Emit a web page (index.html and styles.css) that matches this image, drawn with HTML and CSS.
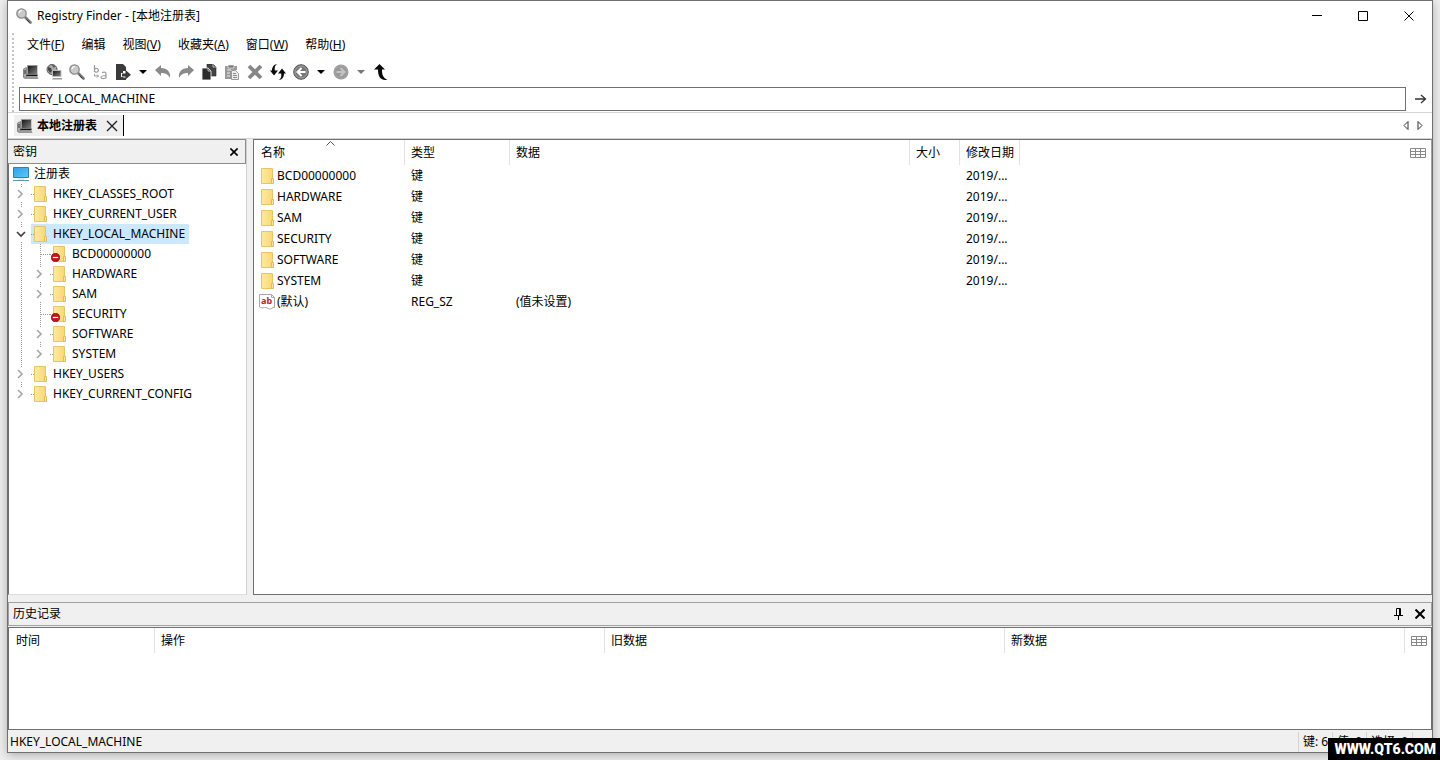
FILE: index.html
```html
<!DOCTYPE html>
<html lang="zh-CN">
<head>
<meta charset="utf-8">
<title>Registry Finder - [本地注册表]</title>
<link rel="stylesheet" href="styles.css">
</head>
<body>
<svg class="defs" aria-hidden="true">
  <defs>
    <linearGradient id="gFolder" x1="0" y1="0" x2="1" y2="0"><stop offset="0" stop-color="#ffe9a2"/><stop offset="1" stop-color="#f8d775"/></linearGradient>
    <linearGradient id="gScreen" x1="0" y1="0" x2="1" y2="1"><stop offset="0" stop-color="#111"/><stop offset="1" stop-color="#888"/></linearGradient>
    <linearGradient id="gBlue" x1="0" y1="0" x2="1" y2="1"><stop offset="0" stop-color="#2e9fe6"/><stop offset="1" stop-color="#5ec8fa"/></linearGradient>
    <symbol id="folder" viewBox="0 0 14 16"><path d="M.5.5h11v15H.5z" fill="url(#gFolder)" stroke="#e6c567"/><path d="M10.500 10.500h2v5h-2z" fill="#ffe699" stroke="#dfbd58"/></symbol>
    <symbol id="chev" viewBox="0 0 8 10"><path d="M2 1l4 4-4 4" fill="none" stroke="#a6a6a6" stroke-width="1.600"/></symbol>
    <symbol id="chevd" viewBox="0 0 10 8"><path d="M1 2l4 4 4-4" fill="none" stroke="#404040" stroke-width="1.700"/></symbol>
    <symbol id="search" viewBox="0 0 16 16"><path d="M9.500 9.500l5 5" stroke="#777" stroke-width="2.600" stroke-linecap="round"/><path d="M10.500 11.500l3 3" stroke="#333" stroke-width="1"/><circle cx="5.500" cy="5.500" r="4.700" fill="#c9c9c9" stroke="#8a8a8a" stroke-width="1.300"/><path d="M3 5a3 3 0 0 1 3-2.500" stroke="#fff" stroke-width="1.200" fill="none"/></symbol>
    <symbol id="pc" viewBox="0 0 16 16"><path d="M.5 5l3-1.500V13l-3 .5z" fill="#aaa" stroke="#888"/><path d="M1 7h2M1 9h2" stroke="#333"/><path d="M4.500 1.500h10v9h-10z" fill="url(#gScreen)" stroke="#999"/><path d="M14.500 1.500v9" stroke="#ccc"/><path d="M2 12.500h12.500l1 2.500H1z" fill="#999"/><path d="M3.500 11.500h11" stroke="#111" stroke-width="1.500"/></symbol>
    <symbol id="globe" viewBox="0 0 16 16"><circle cx="6" cy="5.500" r="5" fill="#aaa" stroke="#555"/><path d="M2 3l3 1 1 3-2 2-2-3zM6 1l3 1-1 2z" fill="#444"/><path d="M6.500 6.500h8.500v6H6.500z" fill="url(#gScreen)" stroke="#bbb"/><path d="M7 14h9v1.500H6z" fill="#999"/></symbol>
    <symbol id="replace" viewBox="0 0 16 16"><path d="M2.500 1v7M2.500 5.500a2 2 0 1 1 0 1.500M10 8.500c3-1 4 0 4 1.500v4.500M14 11.500c-4 0-5 .5-5 2s4 1.500 5 0" fill="none" stroke="#999" stroke-width="1.200"/><path d="M2.500 10v2h4M5 10.500L6.500 12 5 13.500" fill="none" stroke="#999"/></symbol>
    <symbol id="export" viewBox="0 0 16 16"><path d="M1 0h7l3 3v4H8v2H6v4h2v3H1z" fill="#3b3b3b"/><path d="M7 9.500h3.500V6L16 10.800l-5.500 4.700v-3H7z" fill="#3b3b3b"/><path d="M8 13.500h3V16H8z" fill="#3b3b3b"/></symbol>
    <symbol id="undo" viewBox="0 0 16 16"><path d="M0 6l6-5v3c6 0 10 4 9 10-2-4-5-5-9-5v3z" fill="#8a8a8a"/></symbol>
    <symbol id="copy" viewBox="0 0 16 16"><path d="M6 0h6l3 3v9H6z" fill="#444" stroke="#222" stroke-width=".6"/><path d="M1 4h6l3 3v9H1z" fill="#2d2d2d" stroke="#fff" stroke-width=".8"/><path d="M7 4v3h3M12 0v3h3" fill="none" stroke="#ddd" stroke-width=".8"/></symbol>
    <symbol id="paste" viewBox="0 0 16 16"><path d="M1 2h12v4h-6v9H1z" fill="#999"/><path d="M4 1h6v3H4z" fill="#777" stroke="#eee" stroke-width=".7"/><path d="M3 6h4M3 9h3M3 12h3" stroke="#eee"/><path d="M7.500 6.500h4l3 3v6h-7z" fill="#eee" stroke="#999"/><path d="M9 9.500h3M9 11.500h4M9 13.500h4" stroke="#888"/></symbol>
    <symbol id="del" viewBox="0 0 16 16"><path d="M2 2l12 12M14 2L2 14" stroke="#868686" stroke-width="3.800"/></symbol>
    <symbol id="refresh" viewBox="0 0 16 16"><path d="M7.500 0C4.500 1.500 4.600 3.500 4.900 6.500H8L4 11.500 0 6.500h2C2 3.500 3.500.2 7.500 0zM8.500 16c3-1.500 3-3.500 2.700-6.500H8l4-5 4 5h-2c0 3-1.500 6.500-5.500 6.500z" fill="#0a0a0a"/></symbol>
    <symbol id="back" viewBox="0 0 16 16"><circle cx="8" cy="8" r="7.300" fill="#777" stroke="#555"/><circle cx="8" cy="8" r="6" fill="none" stroke="#aaa" stroke-width=".8"/><path d="M12.500 8H5M8.500 4L4.500 8l4 4" fill="none" stroke="#fff" stroke-width="2"/></symbol>
    <symbol id="fwd" viewBox="0 0 16 16"><circle cx="8" cy="8" r="7.500" fill="#999"/><circle cx="8" cy="8" r="6.300" fill="none" stroke="#aaa" stroke-width=".8"/><path d="M3.500 8H11M7.500 4l4 4-4 4" fill="none" stroke="#c4c4c4" stroke-width="2"/></symbol>
    <symbol id="up" viewBox="0 0 16 16"><path d="M6.500 0L12 5.500H9C9 10 9.500 13.500 14.500 16 7.500 16.500 5 13 5 5.500H1z" fill="#0a0a0a"/></symbol>
    <symbol id="drop" viewBox="0 0 8 4"><path d="M0 0h8L4 4z" fill="currentColor"/></symbol>
    <symbol id="x" viewBox="0 0 10 10"><path d="M.5.5l9 9M9.500.5l-9 9" fill="none" stroke="currentColor"/></symbol>
    <symbol id="grid" viewBox="0 0 16 10"><path d="M.5.5h15v9H.5zM.5 3.500h15M.5 6.500h15M5.500.5v9M10.500.5v9" fill="none" stroke="#888"/></symbol>
    <symbol id="monitor" viewBox="0 0 16 15"><path d="M.5.500h15v10H.5z" fill="url(#gBlue)" stroke="#2d7fb5"/><path d="M5 12h6" stroke="#b5d3e5"/><path d="M0 13.500h16" stroke="#5f93b5"/></symbol>
    <symbol id="ban" viewBox="0 0 10 10"><circle cx="5" cy="5" r="4.500" fill="#c4161c" stroke="#8f1014"/><path d="M2 5h6" stroke="#fff" stroke-width="1.300"/></symbol>
    <symbol id="sheet" viewBox="0 0 16 16"><path d="M.5.5h12l3 3v10c-2-1-3 2-5 1.500s-3-2-5-1.500-3 .5-5-.5z" fill="#fff" stroke="#a8a8a8"/><path d="M12.500.5v3h3" fill="none" stroke="#a8a8a8"/></symbol>
  </defs>
</svg>

<main class="window">
  <header class="titlebar">
    <svg class="i16"><use href="#search"/></svg>
    <h1 class="title">Registry Finder - [本地注册表]</h1>
    <button class="winbtn" aria-label="最小化"><svg width="10" height="10"><path d="M0 4.500h10" stroke="#000"/></svg></button>
    <button class="winbtn" aria-label="最大化"><svg width="10" height="10"><path d="M.5.5h9v9h-9z" fill="none" stroke="#000"/></svg></button>
    <button class="winbtn" aria-label="关闭"><svg width="10" height="10"><use href="#x"/></svg></button>
  </header>

  <div class="bars">
    <nav class="menu">
      <button>文件(<u>F</u>)</button><button>编辑</button><button>视图(<u>V</u>)</button><button>收藏夹(<u>A</u>)</button><button>窗口(<u>W</u>)</button><button>帮助(<u>H</u>)</button>
    </nav>
    <div class="toolbar">
      <button aria-label="本地注册表"><svg class="i16"><use href="#pc"/></svg></button>
      <button aria-label="远程注册表"><svg class="i16"><use href="#globe"/></svg></button>
      <button aria-label="查找"><svg class="i16"><use href="#search"/></svg></button>
      <button aria-label="替换"><svg class="i16"><use href="#replace"/></svg></button>
      <button aria-label="导出"><svg class="i16"><use href="#export"/></svg></button>
      <button class="arrow" aria-label="导出选项"><svg class="dr"><use href="#drop"/></svg></button>
      <button aria-label="撤消"><svg class="i16"><use href="#undo"/></svg></button>
      <button aria-label="重做"><svg class="i16 flip"><use href="#undo"/></svg></button>
      <button aria-label="复制"><svg class="i16"><use href="#copy"/></svg></button>
      <button aria-label="粘贴"><svg class="i16"><use href="#paste"/></svg></button>
      <button aria-label="删除"><svg class="i16"><use href="#del"/></svg></button>
      <button aria-label="刷新"><svg class="i16"><use href="#refresh"/></svg></button>
      <button aria-label="后退"><svg class="i16"><use href="#back"/></svg></button>
      <button class="arrow" aria-label="后退历史"><svg class="dr"><use href="#drop"/></svg></button>
      <button aria-label="前进"><svg class="i16"><use href="#fwd"/></svg></button>
      <button class="arrow dim" aria-label="前进历史"><svg class="dr"><use href="#drop"/></svg></button>
      <button aria-label="向上"><svg class="i16"><use href="#up"/></svg></button>
    </div>
    <div class="address">
      <input type="text" aria-label="地址" value="HKEY_LOCAL_MACHINE">
      <button aria-label="转到"><svg width="12" height="10"><path d="M0 5h10M6 1l4.500 4L6 9" fill="none" stroke="#333" stroke-width="1.300"/></svg></button>
    </div>
  </div>

  <div class="tabs">
    <div class="tab">
      <svg class="i16"><use href="#pc"/></svg>
      <span>本地注册表</span>
      <button aria-label="关闭标签"><svg width="12" height="12" viewBox="0 0 12 12"><path d="M1 1l10 10M11 1L1 11" stroke="#222" stroke-width="1.400"/></svg></button>
    </div>
    <div class="tabnav">
      <button aria-label="上一个"><svg width="6" height="9"><path d="M5 .5v8L1 4.500z" fill="none" stroke="#333"/></svg></button>
      <button aria-label="下一个"><svg width="6" height="9"><path d="M1 .5v8l4-4z" fill="none" stroke="#333"/></svg></button>
    </div>
  </div>

  <div class="panes">
    <section class="keys">
      <div class="keyhead"><h2>密钥</h2><button aria-label="关闭"><svg width="8" height="8" viewBox="0 0 10 10" class="bold"><use href="#x"/></svg></button></div>
      <ul class="tree">
        <li class="row root"><svg class="mon"><use href="#monitor"/></svg><span>注册表</span></li>
        <li class="row"><button class="tw" aria-label="展开"><svg class="cv"><use href="#chev"/></svg></button><span class="node"><svg class="fo"><use href="#folder"/></svg>HKEY_CLASSES_ROOT</span></li>
        <li class="row"><button class="tw" aria-label="展开"><svg class="cv"><use href="#chev"/></svg></button><span class="node"><svg class="fo"><use href="#folder"/></svg>HKEY_CURRENT_USER</span></li>
        <li class="row"><button class="tw" aria-label="折叠"><svg class="cd"><use href="#chevd"/></svg></button><span class="node sel"><svg class="fo"><use href="#folder"/></svg>HKEY_LOCAL_MACHINE</span></li>
        <li class="row"><i class="guide"></i><i class="tw leaf"></i><span class="node"><svg class="fo"><use href="#folder"/></svg><svg class="ban"><use href="#ban"/></svg>BCD00000000</span></li>
        <li class="row"><i class="guide"></i><button class="tw" aria-label="展开"><svg class="cv"><use href="#chev"/></svg></button><span class="node"><svg class="fo"><use href="#folder"/></svg>HARDWARE</span></li>
        <li class="row"><i class="guide"></i><button class="tw" aria-label="展开"><svg class="cv"><use href="#chev"/></svg></button><span class="node"><svg class="fo"><use href="#folder"/></svg>SAM</span></li>
        <li class="row"><i class="guide"></i><i class="tw leaf"></i><span class="node"><svg class="fo"><use href="#folder"/></svg><svg class="ban"><use href="#ban"/></svg>SECURITY</span></li>
        <li class="row"><i class="guide"></i><button class="tw" aria-label="展开"><svg class="cv"><use href="#chev"/></svg></button><span class="node"><svg class="fo"><use href="#folder"/></svg>SOFTWARE</span></li>
        <li class="row"><i class="guide"></i><button class="tw end" aria-label="展开"><svg class="cv"><use href="#chev"/></svg></button><span class="node"><svg class="fo"><use href="#folder"/></svg>SYSTEM</span></li>
        <li class="row"><button class="tw" aria-label="展开"><svg class="cv"><use href="#chev"/></svg></button><span class="node"><svg class="fo"><use href="#folder"/></svg>HKEY_USERS</span></li>
        <li class="row"><button class="tw end" aria-label="展开"><svg class="cv"><use href="#chev"/></svg></button><span class="node"><svg class="fo"><use href="#folder"/></svg>HKEY_CURRENT_CONFIG</span></li>
      </ul>
    </section>

    <section class="values">
      <table class="grid">
        <colgroup><col class="c-name"><col class="c-type"><col class="c-data"><col class="c-size"><col class="c-date"><col></colgroup>
        <thead><tr><th class="sorted">名称<svg class="sort" width="9" height="5"><path d="M.5 4.500l4-4 4 4" fill="none" stroke="#555"/></svg></th><th>类型</th><th>数据</th><th>大小</th><th>修改日期</th><th class="pick"><button aria-label="选择列"><svg class="gi"><use href="#grid"/></svg></button></th></tr></thead>
        <tbody>
          <tr><td><span class="cell"><svg class="fo"><use href="#folder"/></svg>BCD00000000</span></td><td>键</td><td></td><td></td><td>2019/...</td><td></td></tr>
          <tr><td><span class="cell"><svg class="fo"><use href="#folder"/></svg>HARDWARE</span></td><td>键</td><td></td><td></td><td>2019/...</td><td></td></tr>
          <tr><td><span class="cell"><svg class="fo"><use href="#folder"/></svg>SAM</span></td><td>键</td><td></td><td></td><td>2019/...</td><td></td></tr>
          <tr><td><span class="cell"><svg class="fo"><use href="#folder"/></svg>SECURITY</span></td><td>键</td><td></td><td></td><td>2019/...</td><td></td></tr>
          <tr><td><span class="cell"><svg class="fo"><use href="#folder"/></svg>SOFTWARE</span></td><td>键</td><td></td><td></td><td>2019/...</td><td></td></tr>
          <tr><td><span class="cell"><svg class="fo"><use href="#folder"/></svg>SYSTEM</span></td><td>键</td><td></td><td></td><td>2019/...</td><td></td></tr>
          <tr><td><span class="cell"><span class="ab"><svg class="i16"><use href="#sheet"/></svg><b>ab</b></span>(默认)</span></td><td>REG_SZ</td><td>(值未设置)</td><td></td><td></td><td></td></tr>
        </tbody>
      </table>
    </section>
  </div>

  <section class="history">
    <div class="histhead"><h2>历史记录</h2>
      <button aria-label="固定"><svg width="9" height="12"><path d="M2.500 7V.5h4V7M0 7.500h9M4.500 7.500V12M5.500 1v6" fill="none" stroke="#000"/></svg></button>
      <button aria-label="关闭"><svg width="10" height="10" class="bold"><use href="#x"/></svg></button>
    </div>
    <div class="histlist">
      <table class="grid">
        <colgroup><col class="h-time"><col class="h-op"><col class="h-old"><col class="h-new"><col></colgroup>
        <thead><tr><th>时间</th><th>操作</th><th>旧数据</th><th>新数据</th><th class="pick"><button aria-label="选择列"><svg class="gi"><use href="#grid"/></svg></button></th></tr></thead>
      </table>
    </div>
  </section>

  <footer class="status"><span class="path">HKEY_LOCAL_MACHINE</span><span>键: 6</span><span>值: 0</span><span class="wide">选择: 0</span><span class="tail"></span></footer>
</main>
<div class="mark">WWW.QT6.COM</div>
</body>
</html>
```

FILE: styles.css
```css
* { box-sizing: border-box; }
body {
  margin: 0;
  height: 100vh;
  padding: 0 7px 7px;
  display: flex;
  background: #f0f0f0;
  color: #000;
  font: 12px/20px "Noto Sans", "Noto Sans CJK SC", sans-serif;
  overflow: hidden;
}
button { border: 0; padding: 0; background: none; font: inherit; color: inherit; display: flex; align-items: center; justify-content: center; }
svg { display: block; flex: none; }
h1, h2 { margin: 0; font-size: 12px; font-weight: 400; }
.defs { position: absolute; width: 0; height: 0; }
.i16 { width: 16px; height: 16px; }
.window { flex: 1; min-width: 0; display: flex; flex-direction: column; background: #fff; border: 1px solid #707070; box-shadow: 0 2px 10px #aaa; }

.titlebar { display: flex; align-items: center; height: 30px; padding-left: 8px; }
.title { flex: 1; padding-left: 5px; }
.winbtn { width: 46px; height: 30px; }

.bars { position: relative; padding-left: 11px; border-bottom: 1px solid #d4d4d4; }
.bars::before { content: ""; position: absolute; left: 4px; top: 2px; bottom: 0; border-left: 2px dotted #c4c4c4; }
.menu { display: flex; gap: 17px; height: 28px; padding-left: 8px; align-items: center; }
.toolbar { display: flex; align-items: center; height: 26px; }
.toolbar button { width: 23px; height: 24px; }
.toolbar .arrow { width: 17px; }
.toolbar .dim { color: #777; }
.dr { width: 8px; height: 4px; }
.flip { transform: scaleX(-1); }
.address { display: flex; padding: 2px 0 1px; }
.address input { flex: 1; min-width: 0; height: 24px; border: 1px solid #707070; padding: 0 3px 1px; font: inherit; background: #fff; }
.address button { width: 26px; padding-left: 4px; }

.tabs { display: flex; align-items: center; justify-content: space-between; height: 26px; border-bottom: 1px solid #d4d4d4; }
.tab { display: flex; align-items: center; margin-left: 6px; padding-left: 3px; height: 21px; background: #efefef; border-right: 1px solid #000; font-weight: 700; }
.tab span { padding-left: 4px; }
.tab button { width: 26px; height: 20px; padding-left: 3px; }
.tabnav { display: flex; gap: 8px; padding-right: 9px; }

.panes { flex: 1; min-height: 0; display: grid; grid-template-columns: 239px 1fr; gap: 6px; background: #f0f0f0; }
.keys { display: flex; flex-direction: column; border-right: 1px solid #d0d0d0; }
.keyhead { display: flex; align-items: center; justify-content: space-between; height: 25px; padding: 0 7px 0 5px; border: 1px solid #8c8c8c; border-left: 0; background: #f0f0f0; }
.bold { stroke-width: 2px; overflow: visible; }
.tree { flex: 1; margin: 0; padding: 0 0 0 1px; list-style: none; background: #fff; border-left: 1px solid #707070; border-bottom: 1px solid #ddd; }
.row { display: flex; height: 20px; padding-left: 2px; }
.root { align-items: center; gap: 5px; }
.mon { width: 16px; height: 15px; margin-left: 1px; }
.tw, .guide { width: 19px; height: 20px; background: repeating-linear-gradient(#999 0 1px, #fff 1px 2px) 9px 0 / 1px 100% no-repeat; }
.tw { justify-content: flex-start; padding-left: 4px; }
.tw.end { background-size: 1px 10px; }
.tw svg { background: #fff; }
.cv { width: 8px; height: 14px; }
.cd { width: 10px; height: 14px; }
.leaf { position: relative; }
.leaf::after { content: ""; position: absolute; left: 10px; right: 0; top: 10px; border-top: 1px dotted #999; }
.node { position: relative; display: flex; align-items: center; padding-right: 4px; }
.node::before { content: ""; width: 3px; border-top: 1px dotted #999; }
.fo { width: 14px; height: 16px; margin-right: 5px; }
.node.sel { background: #cce8ff; }
.ban { position: absolute; left: 1px; top: 9px; width: 9px; height: 9px; }

.values { background: #fff; border: 1px solid #707070; border-right-color: #a0a0a0; }
.grid { width: 100%; table-layout: fixed; border-collapse: separate; border-spacing: 0; }
.grid th { height: 25px; padding: 0 0 0 7px; text-align: left; font-weight: 400; border-right: 1px solid #e2e2e2; }
.grid td { height: 21px; padding: 0 0 0 7px; line-height: 20px; white-space: nowrap; }
.grid th + th, .grid td + td { padding-left: 6px; }
.grid th.pick { border: 0; padding-right: 5px; }
.pick button { margin-left: auto; }
.gi { width: 16px; height: 10px; }
.c-name { width: 151px; } .c-type { width: 105px; } .c-data { width: 400px; } .c-size { width: 50px; } .c-date { width: 60px; }
.sorted { position: relative; }
.sort { position: absolute; left: 72px; top: 1px; }
.cell { display: flex; align-items: center; height: 20px; }
.cell .fo { margin-right: 2px; }
.ab { position: relative; width: 16px; height: 16px; margin: 0 2px 0 -2px; }
.ab b { position: absolute; left: 2px; top: 2px; font: 700 9px/10px "Noto Sans", sans-serif; color: #b22a20; }

.history { background: #f0f0f0; padding-top: 7px; }
.histhead { display: flex; align-items: center; gap: 12px; height: 24px; padding: 0 6px 0 4px; border: 1px solid #a0a0a0; }
.histhead h2 { flex: 1; }
.histlist { height: 103px; margin-top: 1px; background: #fff; border: 1px solid #707070; }
.h-time { width: 146px; } .h-op { width: 450px; } .h-old { width: 400px; } .h-new { width: 400px; }

.status { display: flex; align-items: center; height: 22px; padding: 1px 0 0 2px; background: #f0f0f0; }
.status span { width: 34px; padding-left: 4px; border-left: 1px solid #d4d4d4; white-space: nowrap; }
.status .path { flex: 1; padding: 0; border: 0; }
.status .wide { width: 46px; }
.status .tail { width: 20px; height: 20px; }
.mark { position: absolute; right: 0; bottom: 0; height: 22px; padding: 0 4px 0 6px; background: #000; color: #fff; font: 900 14px/23px Roboto, "Liberation Sans", sans-serif; }
```
